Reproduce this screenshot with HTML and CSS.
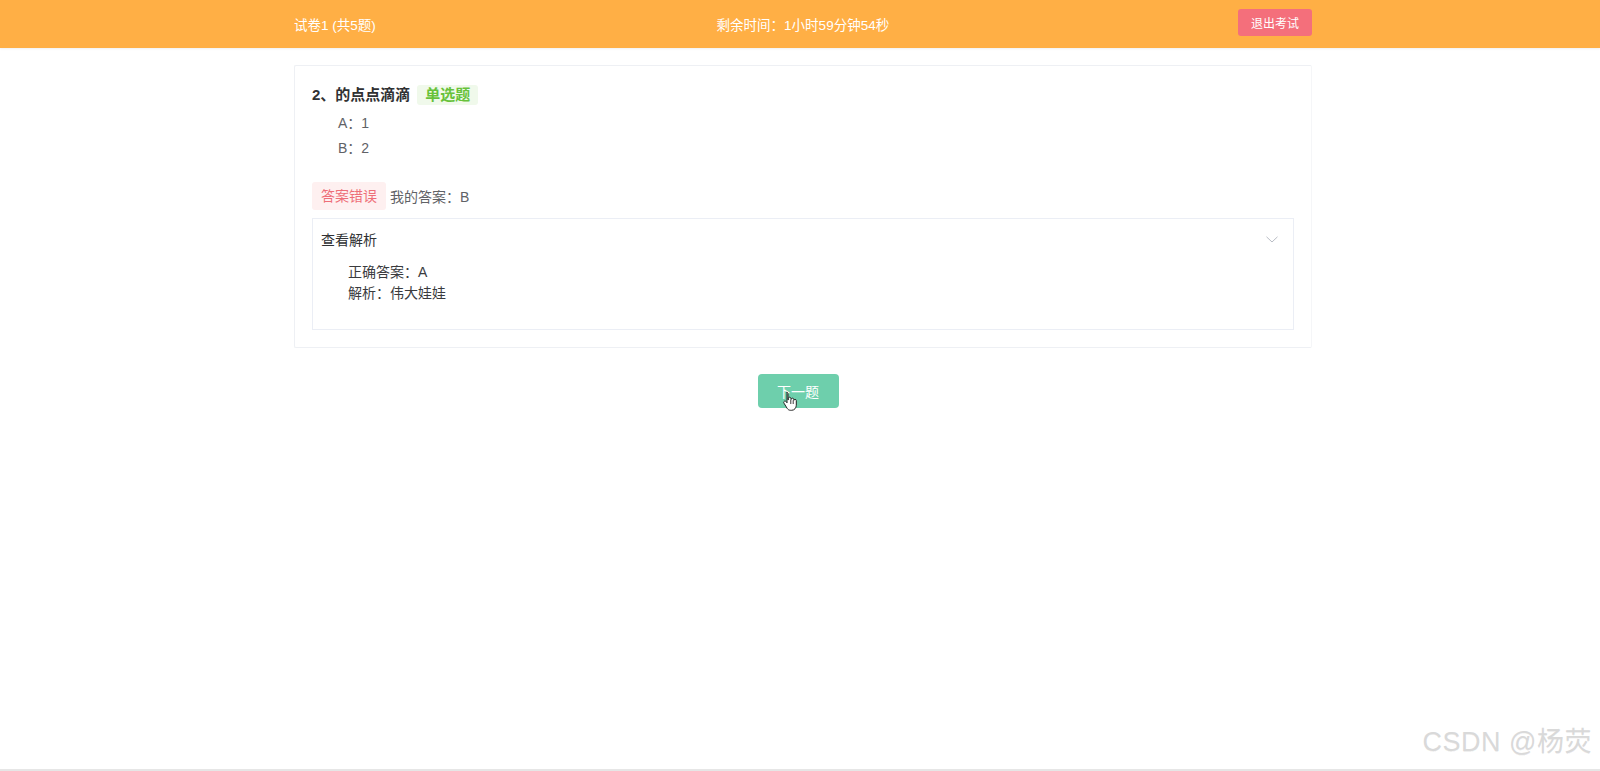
FILE: index.html
```html
<!DOCTYPE html>
<html lang="zh-CN">
<head>
<meta charset="utf-8">
<title>试卷1</title>
<link rel="stylesheet" href="styles.css">
</head>
<body>
<header class="topbar">
  <div class="topbar-inner">
    <span class="paper-title">试卷1 (共5题)</span>
    <span class="timer">剩余时间：1小时59分钟54秒</span>
    <button class="exit-btn">退出考试</button>
  </div>
</header>
<main class="wrap">
  <section class="card">
    <div class="q-title">2、的点点滴滴<span class="q-type">单选题</span></div>
    <ul class="options">
      <li>A：1</li>
      <li>B：2</li>
    </ul>
    <div class="answer-row">
      <span class="wrong-tag">答案错误</span>
      <span class="my-answer">我的答案：B</span>
    </div>
    <div class="collapse">
      <div class="collapse-head">
        <span>查看解析</span>
        <svg class="chev" width="12" height="7" viewBox="0 0 12 7"><path d="M0.5 0.8 L6 6 L11.5 0.8" fill="none" stroke="#b8bcc4" stroke-width="1"/></svg>
      </div>
      <div class="collapse-body">
        <p>正确答案：A</p>
        <p>解析：伟大娃娃</p>
      </div>
    </div>
  </section>
  <div class="next-row">
    <button class="next-btn">下一题
      <svg class="cursor" width="16" height="20" viewBox="0 0 16 20"><path d="M4.5 1.2c.9 0 1.5.6 1.5 1.5v6.2l.3-.1V7.5c0-.8.6-1.3 1.3-1.3s1.3.5 1.3 1.3v1l.3-.1c0-.8.6-1.2 1.3-1.2s1.3.5 1.3 1.3v.9c.1-.7.6-1.1 1.2-1.1.7 0 1.3.5 1.3 1.300v4.6c0 2.7-1.9 5.1-4.7 5.1H8.6c-1.6 0-2.600-.7-3.5-2L2 12.2c-.5-.7-.3-1.5.3-1.9.6-.4 1.4-.2 1.8.3l.9 1.2V2.7c0-.9-.4-1.5-.5-1.5z" fill="#fff" stroke="#222" stroke-width="1" stroke-linejoin="round"/><path d="M8.8 9v4M11.2 9.4v3.6" stroke="#222" stroke-width="0.9"/></svg>
    </button>
  </div>
</main>
<div class="watermark">CSDN @杨荧</div>
<div class="bottom-line"></div>
</body>
</html>
```

FILE: styles.css
```css
html, body {
  margin: 0;
  padding: 0;
  background: #fff;
}
body {
  font-family: "Liberation Sans", "Noto Sans CJK SC", sans-serif;
  color: #303133;
  height: 771px;
  position: relative;
  overflow: hidden;
}
.topbar {
  height: 48px;
  background: #ffaf45;
  box-shadow: 0 1px 2px rgba(0,0,0,0.06);
}
.topbar-inner {
  width: 1024px;
  margin: 0 auto;
  padding-left: 6px;
  box-sizing: border-box;
  height: 100%;
  display: flex;
  align-items: center;
  justify-content: space-between;
  color: #fff;
  font-size: 13.5px;
}
.timer {
  margin-right: 8px;
}
.exit-btn {
  align-self: flex-start;
  margin-top: 9px;
  height: 27px;
  width: 74px;
  border: none;
  border-radius: 3px;
  background: #f46f7b;
  color: #fff;
  font-family: inherit;
  font-size: 12px;
  padding: 0;
}
.wrap {
  width: 1024px;
  margin: 0 auto;
  padding-left: 6px;
  box-sizing: border-box;
}
.card {
  margin-top: 17px;
  border: 1px solid #eef0f4;
  border-right-color: #f5f6f8;
  border-radius: 2px;
  padding: 17px;
}
.q-title {
  font-size: 15px;
  font-weight: bold;
  line-height: 24px;
  color: #303133;
  display: flex;
  align-items: center;
}
.q-type {
  margin-left: 7px;
  background: #f0f9eb;
  color: #67c23a;
  font-size: 15px;
  font-weight: bold;
  height: 20px;
  line-height: 20px;
  padding: 0 8px;
  border-radius: 3px;
}
.options {
  list-style: none;
  margin: 4px 0 0 0;
  padding: 0 0 0 26px;
  font-size: 14px;
  color: #606266;
  line-height: 25px;
}
.answer-row {
  margin-top: 21px;
  display: flex;
  align-items: center;
  font-size: 14px;
}
.wrong-tag {
  display: inline-block;
  height: 28px;
  line-height: 28px;
  padding: 0 9px;
  background: #fef0f0;
  color: #ee6f78;
  border-radius: 3px;
}
.my-answer {
  margin-left: 4px;
  color: #606266;
}
.collapse {
  margin-top: 8px;
  border: 1px solid #ebeef5;
}
.collapse-head {
  height: 40px;
  display: flex;
  align-items: center;
  justify-content: space-between;
  padding: 0 15px 0 8px;
  font-size: 14px;
  color: #303133;
}
.chev {
  display: block;
}
.collapse-body {
  padding: 3px 0 25px 35px;
  font-size: 14px;
  line-height: 21px;
  color: #3a3b3e;
}
.collapse-body p {
  margin: 0;
}
.next-row {
  display: flex;
  justify-content: center;
  margin-top: 26px;
}
.next-btn {
  position: relative;
  width: 81px;
  height: 34px;
  border: none;
  border-radius: 4px;
  background: #6ecfac;
  color: #fff;
  font-family: inherit;
  font-size: 14px;
  padding: 0;
  margin-left: -10px;
}
.cursor {
  position: absolute;
  left: 24px;
  top: 17px;
}
.watermark {
  position: absolute;
  right: 8px;
  bottom: 12px;
  font-family: "Liberation Sans", "Noto Sans CJK SC", sans-serif;
  font-size: 27px;
  color: #d9d9d9;
  text-shadow: 0 1px 0 rgba(0,0,0,0.06);
  letter-spacing: 0.5px;
}
.bottom-line {
  position: absolute;
  left: 0;
  right: 0;
  bottom: 0;
  height: 2px;
  background: #e6e6e6;
}
```
